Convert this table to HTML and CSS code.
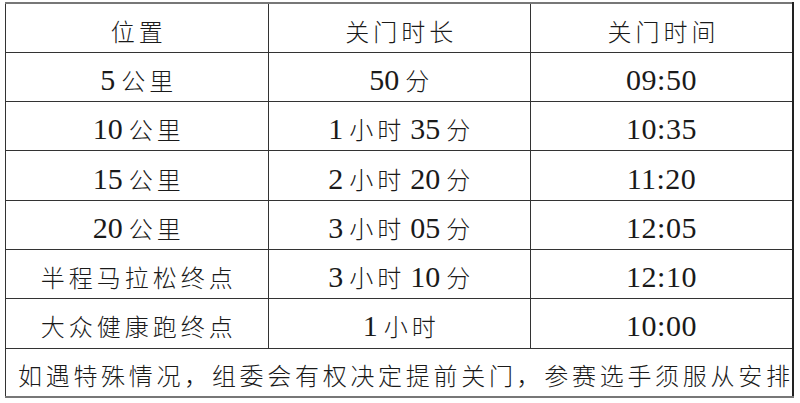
FILE: index.html
```html
<!DOCTYPE html>
<html lang="zh">
<head>
<meta charset="utf-8">
<link rel="stylesheet" href="styles.css">
</head>
<body>
<div class="wrap">
<table class="grid">
  <tr><td>位置</td><td>关门时长</td><td>关门时间</td></tr>
  <tr><td><span class="n">5</span>公里</td><td><span class="n">50</span>分</td><td><span class="n t">09:50</span></td></tr>
  <tr><td><span class="n">10</span>公里</td><td><span class="n">1</span>小时<span class="n l">35</span>分</td><td><span class="n t">10:35</span></td></tr>
  <tr><td><span class="n">15</span>公里</td><td><span class="n">2</span>小时<span class="n l">20</span>分</td><td><span class="n t">11:20</span></td></tr>
  <tr><td><span class="n">20</span>公里</td><td><span class="n">3</span>小时<span class="n l">05</span>分</td><td><span class="n t">12:05</span></td></tr>
  <tr><td>半程马拉松终点</td><td><span class="n">3</span>小时<span class="n l">10</span>分</td><td><span class="n t">12:10</span></td></tr>
  <tr><td>大众健康跑终点</td><td><span class="n">1</span>小时</td><td><span class="n t">10:00</span></td></tr>
  <tr><td class="note" colspan="3">如遇特殊情况，组委会有权决定提前关门，参赛选手须服从安排</td></tr>
</table>
</div>
</body>
</html>
```
FILE: styles.css
```css
html, body {
  margin: 0;
  padding: 0;
  background: #fff;
}
.wrap {
  padding: 2px 0 0 5px;
}
.grid {
  border-collapse: collapse;
  width: 789px;
  table-layout: fixed;
  color: #1a1a1a;
  font-family: "Noto Sans CJK SC", "Noto Sans CJK JP", sans-serif;
  font-weight: 300;
  font-size: 24px;
  letter-spacing: 4px;
  border-top: 2px solid #777;
  border-bottom: 2px solid #777;
  border-left: 1px solid #333;
  border-right: 2px solid #222;
}
.grid td {
  border: 1px solid #333;
  height: 49.3px;
  padding: 6px 0 0 4px;
  box-sizing: border-box;
  text-align: center;
  vertical-align: middle;
  line-height: 30px;
  white-space: nowrap;
}
.grid .n {
  font-family: "Liberation Serif", "Times New Roman", serif;
  font-weight: 400;
  font-size: 30px;
  letter-spacing: 0;
  margin-right: 6px;
}
.grid .n.l {
  margin-left: 5px;
}
.grid .n.t {
  margin-right: 0;
  margin-left: -4px;
  letter-spacing: 0.5px;
}
.grid td.note {
  text-align: left;
  padding-left: 12px;
  letter-spacing: 3.7px;
}
```
